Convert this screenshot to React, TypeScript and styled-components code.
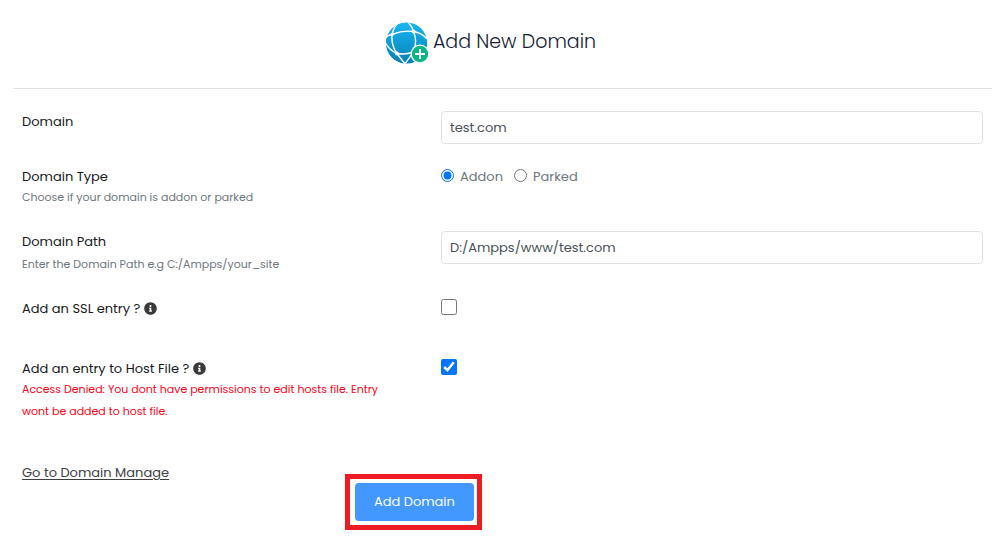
import React from "react";
import styled, { createGlobalStyle } from "styled-components";
import { FaInfoCircle } from "react-icons/fa";

const GlobalStyle = createGlobalStyle`
  *, *::before, *::after { box-sizing: border-box; }
  body {
    margin: 0;
    background: #fff;
    color: #16181b;
    font-family: Poppins, Inter, "Liberation Sans", sans-serif;
    font-size: 13px;
    line-height: 22px;
  }
`;

const Page = styled.main`
  padding: 20px 8px 18px 13px;
`;

const Header = styled.header`
  display: flex;
  align-items: center;
  justify-content: center;
  gap: 4px;
  height: 69px;
  padding: 0 24px 23px 0;
  border-bottom: 1px solid #dee2e6;
`;

const Title = styled.h1`
  margin: 0;
  padding-bottom: 2px;
  font-size: 19px;
  line-height: 26px;
  font-weight: 300;
  color: #141c36;
`;

const Form = styled.form`
  padding: 21px 9px 0;
`;

const Row = styled.div<{ $space?: number }>`
  display: grid;
  grid-template-columns: 43.6% 1fr;
  margin-bottom: ${({ $space = 22 }) => $space}px;
`;

const LabelCell = styled.div<{ $gap?: number }>`
  display: flex;
  flex-direction: column;
  gap: ${({ $gap = 0 }) => $gap}px;
  padding: 2px 48px 0 0;
`;

const Label = styled.label`
  display: flex;
  align-items: center;
  gap: 4px;
  line-height: 19px;
`;

const Hint = styled.span<{ $error?: boolean }>`
  font-size: 11px;
  color: ${({ $error }) => ($error ? "#ff0018" : "#6c757d")};
`;

const InfoIcon = styled(FaInfoCircle)`
  width: 13px;
  height: 13px;
  color: #3a3a3a;
`;

const TextInput = styled.input`
  width: 100%;
  height: 33px;
  margin-top: 1px;
  padding: 0 8px;
  border: 1px solid #dee0e3;
  border-radius: 4px;
  background: #fff;
  color: #495057;
  font: inherit;
`;

const RadioGroup = styled.div`
  display: flex;
  gap: 11px;
  height: 24px;
`;

const RadioLabel = styled.label`
  display: flex;
  align-items: center;
  gap: 6px;
  color: #6c757d;
`;

const Radio = styled.input`
  width: 13px;
  height: 13px;
  margin: 0 0 4px;
  accent-color: #0075ff;
`;

const Checkbox = styled.input`
  width: 16px;
  height: 16px;
  margin: 2px 0 0;
  accent-color: #0075ff;
`;

const Actions = styled.div`
  display: grid;
  grid-template-columns: 33.6% 1fr;
  align-items: start;
`;

const ManageLink = styled.a`
  justify-self: start;
  color: #3c4043;
  text-decoration: underline;
  text-underline-offset: 2px;
`;

const Highlight = styled.div`
  justify-self: start;
  margin-top: 12px;
  padding: 4px 3px 4px 5px;
  border: 5px solid #ed1c24;
`;

const SubmitButton = styled.button`
  display: block;
  width: 119px;
  height: 38px;
  padding: 0;
  border: 0;
  border-radius: 4px;
  background: #4298ff;
  color: #fff;
  font: inherit;
  white-space: nowrap;
`;

const GlobeLogo = () => (
  <svg width="44" height="44" viewBox="0 0 44 44" aria-hidden="true">
    <defs>
      <linearGradient id="sky" x1="0" y1="0" x2="0" y2="1">
        <stop offset="0" stopColor="#18b7f2" />
        <stop offset="1" stopColor="#087fb5" />
      </linearGradient>
      <clipPath id="globe">
        <circle cx="21.5" cy="22" r="20.8" />
      </clipPath>
    </defs>
    <g clipPath="url(#globe)">
      <circle cx="21.5" cy="22" r="20.8" fill="url(#sky)" />
      <g fill="none" stroke="#fff" strokeWidth="1.4">
        <path d="M0 17Q3 14 7 13.5Q18 9 28.5 10.5Q37 12 42 18" />
        <path d="M15 0Q9 5 7 13.5Q6 24 12 32.5Q16 38 21 44" />
        <path d="M22 0Q27 5 28.5 10.5Q33 21 28 31Q24 38 19 44" />
        <path d="M0 21Q4 29 12 32.5Q21 34 28 31" />
      </g>
      <g fill="#fff">
        <circle cx="7" cy="13.5" r="1.7" />
        <circle cx="28.5" cy="10.5" r="2" />
        <circle cx="12" cy="32.5" r="1.9" />
      </g>
    </g>
    <circle cx="35" cy="33" r="9.4" fill="#fff" />
    <circle cx="35" cy="33" r="8.2" fill="#0bb586" />
    <path d="M35 28v10M30 33h10" stroke="#fff" strokeWidth="2" />
  </svg>
);

export default function App() {
  return (
    <>
      <GlobalStyle />
      <Page>
        <Header>
          <GlobeLogo />
          <Title>Add New Domain</Title>
        </Header>
        <Form onSubmit={(e) => e.preventDefault()}>
          <Row $space={21}>
            <LabelCell>
              <Label htmlFor="domain">Domain</Label>
            </LabelCell>
            <TextInput id="domain" type="text" defaultValue="test.com" />
          </Row>
          <Row>
            <LabelCell>
              <Label as="span" id="type-label">Domain Type</Label>
              <Hint>Choose if your domain is addon or parked</Hint>
            </LabelCell>
            <RadioGroup role="radiogroup" aria-labelledby="type-label">
              <RadioLabel>
                <Radio type="radio" name="type" defaultChecked />
                Addon
              </RadioLabel>
              <RadioLabel>
                <Radio type="radio" name="type" />
                Parked
              </RadioLabel>
            </RadioGroup>
          </Row>
          <Row>
            <LabelCell $gap={2}>
              <Label htmlFor="path">Domain Path</Label>
              <Hint>Enter the Domain Path e.g C:/Ampps/your_site</Hint>
            </LabelCell>
            <TextInput id="path" type="text" defaultValue="D:/Ampps/www/test.com" />
          </Row>
          <Row $space={39}>
            <LabelCell>
              <Label htmlFor="ssl">
                Add an SSL entry ? <InfoIcon />
              </Label>
            </LabelCell>
            <Checkbox id="ssl" type="checkbox" />
          </Row>
          <Row $space={40}>
            <LabelCell>
              <Label htmlFor="hosts">
                Add an entry to Host File ? <InfoIcon />
              </Label>
              <Hint $error>
                Access Denied: You dont have permissions to edit hosts file. Entry wont be added to
                host file.
              </Hint>
            </LabelCell>
            <Checkbox id="hosts" type="checkbox" defaultChecked />
          </Row>
          <Actions>
            <ManageLink href="#manage">Go to Domain Manage</ManageLink>
            <Highlight>
              <SubmitButton type="submit">Add Domain</SubmitButton>
            </Highlight>
          </Actions>
        </Form>
      </Page>
    </>
  );
}
